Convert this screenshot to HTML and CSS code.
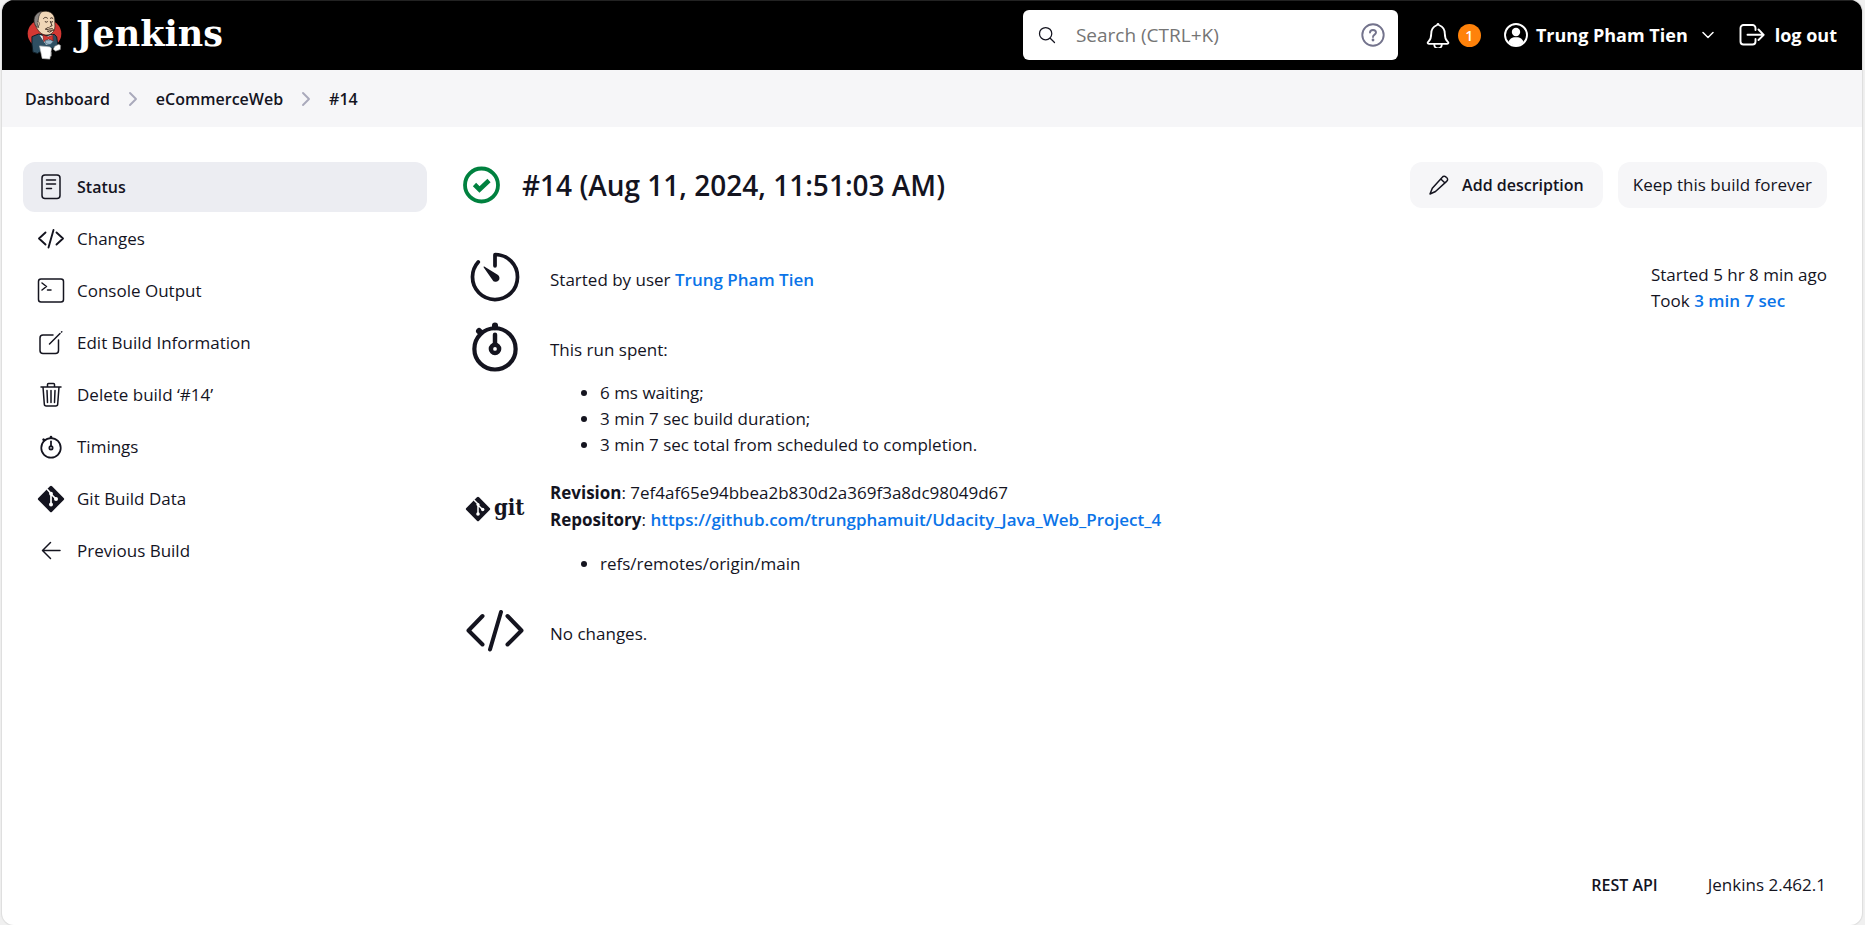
FILE: index.html
```html
<!DOCTYPE html>
<html lang="en">
<head>
<meta charset="utf-8">
<title>eCommerceWeb #14 - Jenkins</title>
<link rel="stylesheet" href="styles.css">
</head>
<body>
<div class="window">
  <header class="header">
    <a class="brand" href="#">
      <svg class="brand-mark" viewBox="34 30 106 150" aria-hidden="true">
        <ellipse cx="87" cy="101" rx="51" ry="45" fill="#d33833"/>
        <path d="M49 110l20-8 20 4 28-3 7 8 4 30-50 12-12 8-14-4-3-24z" fill="#2f4f62" stroke="#0d1a22" stroke-width="3"/>
        <path d="M72 105l16 5 24-6-4 26-16 5z" fill="#f4f4f4"/>
        <path d="M58 66C56 44 74 32 92 33c22 2 28 18 26 36 2 12 0 24-9 31-11 9-28 5-36-3-6-8-15-16-15-31z" fill="#f0d6b7" stroke="#2b211a" stroke-width="2"/>
        <path d="M57 70c-5-16 2-32 22-37-5 7-9 12-10 21l-3 18 4 10c-7 0-11-5-13-12z" fill="#8a8683" stroke="#302a28" stroke-width="2"/>
        <path d="M65 65c6-2 8 5 5 12" fill="#f0d6b7" stroke="#2b211a" stroke-width="2"/>
        <path d="M84 55c4-5 9-4 12-1M105 54q5-4 8 1M89 65q4 3 7 0M105 65q4 3 7 0M105 65l5 12-6 2M91 87c5-8 11-3 14-1 5-2 8 0 10 5-6-1-14 1-24-4zM96 94q6 5 12 0" fill="none" stroke="#3d2a20" stroke-width="3" stroke-linecap="round"/>
        <path d="M82 104l16 7 14-5 1 17-14-6-14 8z" fill="#d33833" stroke="#7b1414" stroke-width="2"/>
        <path d="M89 121l16-1 9 5-10 9-13-2z" fill="#9bb8ca" stroke="#385366" stroke-width="2"/>
        <path d="M72 138l31 3 5 5-5 32-23-2z" fill="#fff" stroke="#c4c4c4" stroke-width="2"/>
        <path d="M118 139l12-6 6 4-1 12-14 5-8-6z" fill="#fff" stroke="#777" stroke-width="2"/>
        <path d="M106 157v12" stroke="#ddd" stroke-width="4"/>
      </svg>
      <span class="brand-name">Jenkins</span>
    </a>
    <form class="search" role="search">
      <svg class="icon-s search-glass" viewBox="0 0 512 512" aria-hidden="true"><path d="M221 64a157 157 0 1 0 157 157A157 157 0 0 0 221 64zM338 338l110 110" class="line w32"/></svg>
      <input type="search" placeholder="Search (CTRL+K)" aria-label="Search">
      <a class="help" href="#" aria-label="Search help">
        <svg class="icon-m" viewBox="0 0 24 24" aria-hidden="true"><g class="line w2"><circle cx="12" cy="12" r="10.7"/><path d="M9 9.6C9 8 10.300 7 12 7s3 1 3 2.600C15 11.800 12 11.500 12 14"/></g><circle cx="12" cy="17" r="1.400" fill="currentColor"/></svg>
      </a>
    </form>
    <nav class="account" aria-label="Account">
      <button class="alerts" type="button" aria-label="Notifications, 1 new">
        <svg class="icon-l" viewBox="0 0 512 512" aria-hidden="true"><path d="M427.700 351.500C407.500 326.800 372.500 312.300 372.500 202.300 372.500 101.600 321.100 65.800 278.700 48.400c-5.600-2.300-10.900-7.600-12.700-13.500C262 19.500 250 19.500 246 34.900c-1.700 6-7 11.200-12.600 13.500C191 65.800 139.600 101.500 139.600 202.300c0 110-35 124.500-55.200 149.200C71.900 366.800 83.100 384 105 384h302.300c21.700 0 32.800-17.300 20.400-32.500zM320 384v16a64 64 0 0 1-128 0v-16" transform="matrix(1.15 0 0 1.100 -38 10)" class="line w32"/></svg>
        <span class="badge">1</span>
      </button>
      <a class="user" href="#">
        <svg class="icon-m" viewBox="0 0 24 24" aria-hidden="true"><circle cx="12" cy="12" r="11" class="line w2"/><circle cx="12" cy="9" r="4.200" fill="currentColor"/><path d="M4.500 19c1.500-4.500 5-4.800 7.500-4.800s6 .3 7.500 4.800c-4 4.600-11 4.600-15 0z" fill="currentColor"/></svg>
        <span>Trung Pham Tien</span>
      </a>
      <button class="more" type="button" aria-label="User menu"><svg class="icon-xs" viewBox="0 0 12 12" aria-hidden="true"><path d="M1 3.500l5 5 5-5" class="line w1"/></svg></button>
      <a class="logout" href="#">
        <svg class="icon-l" viewBox="0 0 26 26" aria-hidden="true"><path d="M16.500 8V6a3 3 0 0 0-3-3H4.500a3 3 0 0 0-3 3v13.500a3 3 0 0 0 3 3h9a3 3 0 0 0 3-3V17M8.500 12.800h16M19.500 7.500l5.200 5.300-5.200 5.200" class="line w2"/></svg>
        <span>log out</span>
      </a>
    </nav>
  </header>

  <nav class="crumbs" aria-label="Breadcrumb">
    <a href="#">Dashboard</a>
    <svg class="crumb-sep" viewBox="0 0 12 16" aria-hidden="true"><path d="M3 2l6 6-6 6" class="line w2"/></svg>
    <a href="#">eCommerceWeb</a>
    <svg class="crumb-sep" viewBox="0 0 12 16" aria-hidden="true"><path d="M3 2l6 6-6 6" class="line w2"/></svg>
    <a href="#">#14</a>
  </nav>

  <div class="page">
    <nav class="tasks" aria-label="Build">
      <a class="task current" href="#" aria-current="page">
        <svg class="task-icon" viewBox="0 0 28 28" aria-hidden="true"><g class="line w1"><rect x="5" y="2" width="18" height="23.500" rx="3"/><path d="M9.500 7h9M9.500 11h9M9.500 15.500h5"/></g></svg>
        <span>Status</span></a>
      <a class="task" href="#">
        <svg class="task-icon" viewBox="0 0 28 28" aria-hidden="true"><path d="M8.500 7.500L2 13.500l6.500 6M19.500 7.500l6.500 6-6.500 6M16.500 5l-5 17.500" class="line w2"/></svg>
        <span>Changes</span></a>
      <a class="task" href="#">
        <svg class="task-icon" viewBox="0 0 28 28" aria-hidden="true"><g class="line w1"><rect x="1.500" y="2" width="25" height="23" rx="2.500"/><path d="M5 6l4.500 3.500L5 13M10.500 13H14"/></g></svg>
        <span>Console Output</span></a>
      <a class="task" href="#">
        <svg class="task-icon" viewBox="0 0 28 28" aria-hidden="true"><path d="M16 6H6a3 3 0 0 0-3 3v12.500a3 3 0 0 0 3 3h12.500a3 3 0 0 0 3-3V11M12.500 15L23 4.500M24.500 3l.3-.3" class="line w1"/></svg>
        <span>Edit Build Information</span></a>
      <a class="task" href="#">
        <svg class="task-icon" viewBox="0 0 28 28" aria-hidden="true"><path d="M6 6l1.300 17a2 2 0 0 0 2 2h9.400a2 2 0 0 0 2-2L22 6M4 6h20M10.500 6V3.500a1 1 0 0 1 1-1h5a1 1 0 0 1 1 1V6M14 9.500v12M10 9.500l.5 12M18 9.500l-.5 12" class="line w1"/></svg>
        <span>Delete build ‘#14’</span></a>
      <a class="task" href="#">
        <svg class="task-icon" viewBox="0 0 512 512" aria-hidden="true"><g class="line w32"><path d="M256 232v-80"/><path d="M256 88V72M132 132l-12-12" stroke-width="48"/><circle cx="256" cy="272" r="30"/><circle cx="256" cy="272" r="178"/></g></svg>
        <span>Timings</span></a>
      <a class="task" href="#">
        <svg class="task-icon" viewBox="0 0 28 28" aria-hidden="true"><rect x="4.300" y="4.300" width="19.400" height="19.400" rx="1.500" transform="rotate(45 14 14)" fill="currentColor"/><g fill="none" stroke="#fff" stroke-width="1.700"><path d="M10 4l4 4.500V19M14 9l5 5"/></g><g fill="#fff"><circle cx="14" cy="8.700" r="1.900"/><circle cx="14" cy="19.500" r="2"/><circle cx="19" cy="14" r="2"/></g></svg>
        <span>Git Build Data</span></a>
      <a class="task" href="#">
        <svg class="task-icon" viewBox="0 0 28 28" aria-hidden="true"><path d="M13.500 5.500L5.500 13.500l8 8M6 13.500h17" class="line w1"/></svg>
        <span>Previous Build</span></a>
    </nav>

    <main class="main">
      <div class="title-bar">
        <svg class="status-icon" viewBox="0 0 38 38" aria-label="Success" role="img"><circle cx="18.500" cy="19" r="16.500" fill="none" stroke="#00813f" stroke-width="3.800"/><path d="M11.500 18.500l5 5 9.500-9" fill="none" stroke="#00813f" stroke-width="4.600"/></svg>
        <h1>#14 (Aug 11, 2024, 11:51:03 AM)</h1>
        <div class="actions">
          <a class="btn strong" href="#">
            <svg class="icon-s" viewBox="0 0 20 20" aria-hidden="true"><path d="M13.300 2.200a2.300 2.300 0 0 1 4 .2 2.300 2.300 0 0 1 .3 4L6.500 16.500 1 19l2.300-5.800zM11.800 4l4.200 4" class="line w1"/></svg>
            <span>Add description</span></a>
          <button class="btn" type="button">Keep this build forever</button>
        </div>
      </div>

      <div class="details">
        <div class="rows">
          <section class="row">
            <svg class="row-icon" viewBox="0 0 512 512" aria-hidden="true"><path d="M112.900 128A191.900 191.900 0 0 0 64 254c-1.200 106.400 83.600 193.600 190 194.800 106.200 1.200 193-84 194-191.500C449 150 364 65.500 258 64a2 2 0 0 0-2 2v94" class="line w32"/><path d="M233.400 278.600L160 175c-3-4-1.500-11 8-7l110.600 69.400a32 32 0 1 1-45.200 41.200z" fill="currentColor"/></svg>
            <div class="row-body">Started by user <a href="#">Trung Pham Tien</a></div>
          </section>
          <section class="row">
            <svg class="row-icon" viewBox="0 0 512 512" aria-hidden="true"><g class="line w32"><path d="M256 232v-80" stroke-width="38"/><path d="M256 88V72M132 132l-12-12" stroke-width="52"/><circle cx="256" cy="272" r="35" stroke-width="38"/><circle cx="256" cy="272" r="176" stroke-width="36"/></g></svg>
            <div class="row-body">This run spent:
              <ul><li>6 ms waiting;</li><li>3 min 7 sec build duration;</li><li>3 min 7 sec total from scheduled to completion.</li></ul>
            </div>
          </section>
          <section class="row">
            <svg class="row-icon" viewBox="0 0 60 60" role="img" aria-label="git"><rect x="4" y="22" width="18" height="18" rx="1.500" transform="rotate(45 13 31)" fill="currentColor"/><g fill="none" stroke="#fff" stroke-width="1.500"><path d="M9 22l4 4v10M13 27l5 5"/></g><g fill="#fff"><circle cx="13" cy="26.500" r="1.600"/><circle cx="13" cy="36" r="1.800"/><circle cx="17.700" cy="31.500" r="1.700"/></g><text x="29" y="37" class="git-word">git</text></svg>
            <div class="row-body git"><b>Revision</b>: 7ef4af65e94bbea2b830d2a369f3a8dc98049d67<br><b>Repository</b>: <a href="#">https://github.com/trungphamuit/Udacity_Java_Web_Project_4</a>
              <ul><li>refs/remotes/origin/main</li></ul>
            </div>
          </section>
          <section class="row">
            <svg class="row-icon" viewBox="0 0 60 60" aria-hidden="true"><path d="M17.500 15L3.500 29.500l14 14M42.500 15l14 14.500-14 14M36 11L25 48.500" class="line w4"/></svg>
            <div class="row-body">No changes.</div>
          </section>
        </div>
        <aside class="timing">Started 5 hr 8 min ago<br>Took <a href="#">3 min 7 sec</a></aside>
      </div>
    </main>
  </div>

  <footer class="footer">
    <a class="rest" href="#">REST API</a>
    <button type="button">Jenkins 2.462.1</button>
  </footer>
</div>
</body>
</html>
```
FILE: styles.css
```css
:root {
  --text: #14141f;
  --link: #0b74e8;
  --grey: #f6f6f8;
}
* { box-sizing: border-box; }
body {
  margin: 0;
  background: #f0f0f0;
  color: var(--text);
  font: 17px/26px "Open Sans", "Noto Sans", sans-serif;
}
a { color: inherit; text-decoration: none; }
button { border: 0; padding: 0; background: none; color: inherit; font: inherit; cursor: pointer; }
svg { display: block; flex: none; }

.line { fill: none; stroke: currentColor; stroke-linecap: round; stroke-linejoin: round; }
.w1 { stroke-width: 1.5; }
.w2 { stroke-width: 1.9; }
.w4 { stroke-width: 4; }
.w32 { stroke-width: 32; }
.icon-xs { width: 12px; height: 12px; }
.icon-s { width: 20px; height: 20px; }
.icon-m { width: 24px; height: 24px; }
.icon-l { width: 26px; height: 26px; }

.window {
  display: flex;
  flex-direction: column;
  min-height: 100vh;
  margin: 0 3px 0 2px;
  border-radius: 12px;
  background: #fff;
  box-shadow: 0 0 1px 1px #ddd;
  overflow: hidden;
}

/* Header */
.header {
  display: flex;
  align-items: center;
  height: 70px;
  padding: 0 25px 1px;
  border-top: 1px solid #222;
  background: #000;
  color: #fff;
}
.brand { display: flex; align-items: center; gap: 14px; margin-right: auto; }
.brand-mark { width: 35px; height: 50px; }
.brand-name { font: bold 35px/46px "DejaVu Serif", serif; padding-bottom: 2px; }
.search {
  display: flex;
  align-items: center;
  width: 375px;
  height: 50px;
  padding: 0 13px 0 14px;
  border-radius: 6px;
  background: #fff;
  color: var(--text);
}
.search input {
  flex: 1;
  min-width: 0;
  margin-left: 19px;
  padding: 0;
  border: 0;
  outline: 0;
  background: none;
  font: 19px/26px "Open Sans", "Noto Sans", sans-serif;
}
.search input::placeholder { color: #757575; opacity: 1; }
.help { color: #73738c; }
.account { display: flex; align-items: center; margin-left: 27px; font-size: 18px; font-weight: 700; }
.alerts { display: flex; align-items: center; gap: 7px; }
.badge {
  width: 23px;
  height: 23px;
  border-radius: 50%;
  background: #ff820a;
  font-size: 14px;
  font-weight: 600;
  line-height: 23px;
  text-align: center;
}
.user { display: flex; align-items: center; gap: 8px; margin-left: 23px; }
.more { margin: 0 25px 0 14px; }
.logout { display: flex; align-items: center; gap: 10px; }

/* Breadcrumbs */
.crumbs {
  display: flex;
  align-items: center;
  gap: 17px;
  height: 57px;
  padding: 0 23px;
  background: var(--grey);
  font-size: 16px;
  font-weight: 600;
}
.crumb-sep { width: 12px; height: 16px; color: #a9a9bb; }

/* Page */
.page { display: flex; flex: 1; gap: 36px; padding: 35px 35px 35px 21px; }
.tasks { display: flex; flex: none; flex-direction: column; gap: 2px; width: 404px; }
.task {
  display: flex;
  align-items: center;
  gap: 12px;
  height: 50px;
  padding: 0 14px;
  border-radius: 12px;
}
.task-icon { width: 28px; height: 28px; }
.current { background: #ecedf2; font-size: 16px; font-weight: 600; }

.main { flex: 1; min-width: 0; }
.title-bar { display: flex; align-items: center; height: 46px; }
.status-icon { width: 38px; height: 38px; }
h1 { margin: 0 auto 0 21px; font-size: 28px; font-weight: 600; line-height: 40px; }
.actions { display: flex; gap: 15px; }
.btn {
  display: flex;
  align-items: center;
  gap: 13px;
  height: 46px;
  padding: 0 15px;
  border-radius: 12px;
  background: var(--grey);
}
.strong { padding: 0 19px; font-size: 16px; font-weight: 600; }

.details { display: flex; justify-content: space-between; padding-top: 39px; }
.rows { display: grid; gap: 10px; padding-left: 2px; }
.row { display: flex; gap: 25px; }
.row-icon { width: 60px; height: 60px; }
.row-body { padding-top: 20px; }
.row-body a, .timing a { color: var(--link); font-weight: 600; }
.row ul { margin: 17px 0 10px; padding-left: 50px; }
.row-body.git { padding-top: 1px; line-height: 27px; }
.row-body.git ul { margin-bottom: 14px; }
.git-word { font: bold 22px "DejaVu Serif Condensed", "DejaVu Serif", serif; fill: currentColor; }
.timing { padding-top: 15px; }

/* Footer */
.footer {
  display: flex;
  align-items: center;
  justify-content: flex-end;
  gap: 50px;
  padding: 0 36px 27px;
}
.rest { font-size: 16px; font-weight: 600; }
```
